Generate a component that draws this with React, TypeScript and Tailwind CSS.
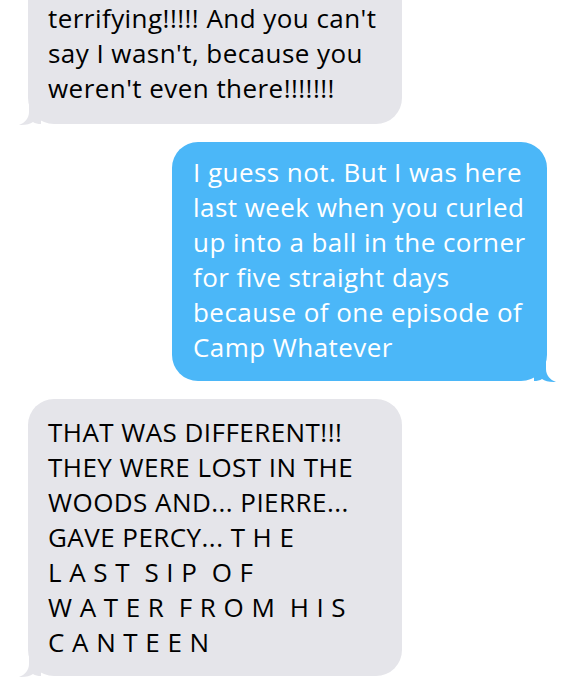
import React from 'react'

const font = { fontFamily: '"Open Sans", "Liberation Sans", sans-serif' }

function GrayTail() {
  return (
    <svg className="absolute -left-[9px] -bottom-[2px]" width="22" height="22" viewBox="0 0 22 22">
      <path d="M22 0 H10 V8 C10 14 6 19 0 21 C6 21.5 11 20 14 18 C16 19.5 19 20 22 20 Z" fill="#e5e5ea" />
    </svg>
  )
}

function BlueTail() {
  return (
    <svg className="absolute -right-[9px] -bottom-[2px]" width="22" height="22" viewBox="0 0 22 22">
      <path d="M0 0 H12 V8 C12 14 16 19 22 21 C16 21.5 11 20 8 18 C6 19.5 3 20 0 20 Z" fill="#4bb7f8" />
    </svg>
  )
}

function Line({ children }: { children: React.ReactNode }) {
  return <div className="whitespace-pre">{children}</div>
}

export default function App() {
  return (
    <div className="w-[575px] h-[693px] overflow-hidden bg-white" style={font}>
      <div className="flex flex-col gap-[18px] text-[26px] leading-[35px] tracking-[0.45px]">
        <div className="relative ml-[28px] w-[374px] bg-[#e5e5ea] rounded-b-[26px] pl-[20px] pr-[16px] pt-[1px] pb-[18px] text-black">
          <Line>terrifying!!!!! And you can't</Line>
          <Line>say I wasn't, because you</Line>
          <Line>weren't even there!!!!!!!</Line>
          <GrayTail />
        </div>

        <div className="relative ml-[172px] w-[375px] bg-[#4bb7f8] rounded-[26px] pl-[21px] pr-[16px] pt-[13px] pb-[16px] text-white">
          <Line>I guess not. But I was here</Line>
          <Line>last week when you curled</Line>
          <Line>up into a ball in the corner</Line>
          <Line>for five straight days</Line>
          <Line>because of one episode of</Line>
          <Line>Camp Whatever</Line>
          <BlueTail />
        </div>

        <div className="relative ml-[28px] w-[374px] bg-[#e5e5ea] rounded-[26px] pl-[20px] pr-[16px] pt-[16px] pb-[16px] text-black">
          <Line>THAT WAS DIFFERENT!!!</Line>
          <Line>THEY WERE LOST IN THE</Line>
          <Line>WOODS AND... PIERRE...</Line>
          <Line>GAVE PERCY... T H E</Line>
          <Line>L A S T  S I P  O F</Line>
          <Line>W A T E R  F R O M  H I S</Line>
          <Line>C A N T E E N</Line>
          <GrayTail />
        </div>
      </div>
    </div>
  )
}
